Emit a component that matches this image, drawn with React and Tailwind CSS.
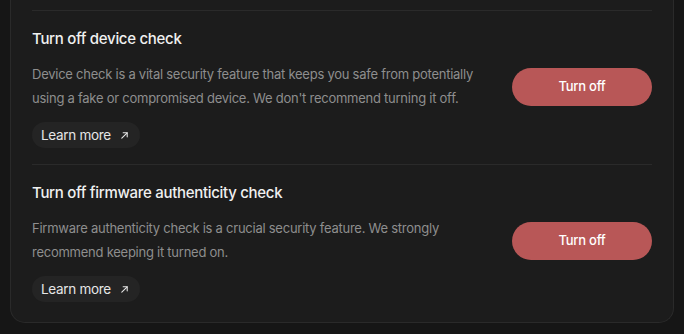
import React from "react";

// Settings card: dangerous security toggles (device check, firmware check)

const sections = [
  {
    id: "device",
    title: "Turn off device check",
    body: "Device check is a vital security feature that keeps you safe from potentially using a fake or compromised device. We don't recommend turning it off.",
  },
  {
    id: "firmware",
    title: "Turn off firmware authenticity check",
    body: "Firmware authenticity check is a crucial security feature. We strongly recommend keeping it turned on.",
  },
];

const ArrowUpRight = () => (
  <svg
    width="9"
    height="9"
    viewBox="0 0 10 10"
    fill="none"
    stroke="currentColor"
    strokeWidth="1.2"
    strokeLinecap="round"
    strokeLinejoin="round"
  >
    <path d="M2 8L8 2" />
    <path d="M3.5 2H8v4.5" />
  </svg>
);

const Section = ({ title, body }) => (
  <div className="flex items-center justify-between border-t border-[#2a2a2a] pt-[18px] pb-[16px]">
    <div className="w-[462px]">
      <h3 className="text-[15px] leading-[20px] font-[450] tracking-[-0.3px] text-[#f0f0f0]">
        {title}
      </h3>
      <p className="mt-[13px] text-[13px] leading-[24px] tracking-[-0.25px] text-[#8e8e8e]">
        {body}
      </p>
      <button className="mt-[12px] flex h-[26px] items-center gap-[9px] rounded-full bg-[#242424] pl-[9px] pr-[11px] text-[13.5px] tracking-[-0.3px] text-[#e6e6e6]">
        Learn more
        <ArrowUpRight />
      </button>
    </div>
    <button className="mb-[3px] h-[38px] w-[140px] rounded-full bg-[#b85757] text-[13px] font-medium tracking-[-0.25px] text-white">
      Turn off
    </button>
  </div>
);

export default function App() {
  return (
    <div
      className="h-[334px] w-full bg-[#161616] px-[10px]"
      style={{ fontFamily: "Inter, 'Noto Sans', sans-serif" }}
    >
      <div className="rounded-b-[15px] border border-t-0 border-[#2a2a2a] bg-[#1c1c1c] px-[21px] pt-[10px] pb-[4px]">
        {sections.map((s) => (
          <Section key={s.id} title={s.title} body={s.body} />
        ))}
      </div>
    </div>
  );
}
